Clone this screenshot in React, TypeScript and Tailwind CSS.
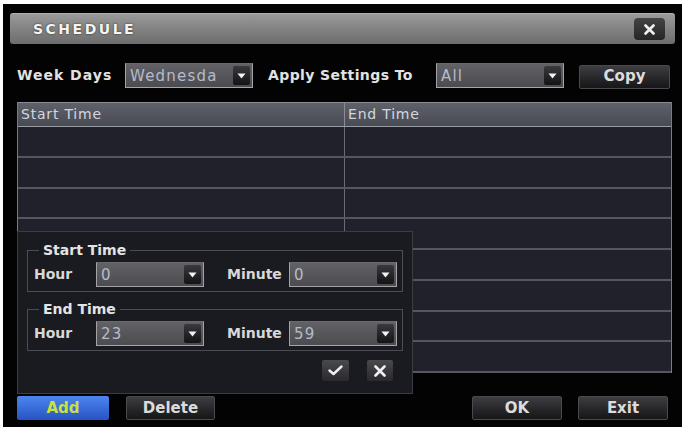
import React from "react";

const font = { fontFamily: '"DejaVu Sans", "Liberation Sans", sans-serif' };

function Arrow() {
  return (
    <div className="flex h-[19px] w-[17px] items-center justify-center rounded-[2px] bg-gradient-to-b from-[#3a3a3e] to-[#141416]">
      <svg width="9" height="6" viewBox="0 0 9 6">
        <path d="M0.5 0.5 H8.5 L4.5 5.5 Z" fill="#f2f2f2" />
      </svg>
    </div>
  );
}

function Select({ value, width }: { value: string; width: string }) {
  return (
    <div
      className={`${width} flex h-[25px] items-center justify-between border border-[#a4a4a8] border-t-[#6a6a6e] bg-gradient-to-b from-[#626266] to-[#4c4c50] pl-[4px] pr-[2px]`}
    >
      <span className="pt-[2px] text-[15px] tracking-[1.2px] text-[#b4bccb]">{value}</span>
      <Arrow />
    </div>
  );
}

function DarkButton({ label, width }: { label: string; width: string }) {
  return (
    <div
      className={`${width} flex h-[24px] items-center justify-center rounded-[2px] border border-[#4a4a4e] bg-gradient-to-b from-[#3e3e42] to-[#161618] text-[15px] font-bold text-[#dcdcdc]`}
    >
      {label}
    </div>
  );
}

function TimeGroup({ title, hour, minute }: { title: string; hour: string; minute: string }) {
  return (
    <fieldset className="w-[376px] border border-[#4c4d54] pb-[4px] pl-[6px] pt-[4px]">
      <legend className="ml-[5px] px-[4px] text-[14px] font-bold leading-[16px] text-[#e4e4e4]">
        {title}
      </legend>
      <div className="flex items-center">
        <span className="w-[62px] text-[14px] font-bold text-[#d8d8d8]">Hour</span>
        <Select value={hour} width="w-[108px]" />
        <span className="ml-[23px] w-[62px] text-[14px] font-bold text-[#d8d8d8]">Minute</span>
        <Select value={minute} width="w-[108px]" />
      </div>
    </fieldset>
  );
}

function TimeTable() {
  const rows = Array.from({ length: 8 });
  return (
    <div className="ml-[14px] mt-[14px] w-[655px] border-x border-[#7a7c84]">
      <div className="grid h-[25px] grid-cols-[327px_1fr] border-y border-t-[#8a8c94] border-b-[#9a9ca4] bg-gradient-to-b from-[#5e616a] to-[#484b54] text-[14px] tracking-[0.8px] text-[#d4d6dc]">
        <div className="flex items-center border-r border-[#8a8c94] pl-[3px]">Start Time</div>
        <div className="flex items-center pl-[3px]">End Time</div>
      </div>
      {rows.map((_, i) => (
        <div key={i} className="grid h-[30.75px] grid-cols-[327px_1fr] border-b-2 border-[#55575f] bg-[#20212a]">
          <div className="border-r border-[#6a6c74]" />
          <div />
        </div>
      ))}
    </div>
  );
}

export default function App() {
  return (
    <div className="h-[429px] w-[684px] bg-white pl-[3px] pt-[4px]" style={font}>
      <div className="relative flex h-[423px] w-[679px] flex-col bg-[#030303]">
        {/* title bar */}
        <div className="mx-[7px] mt-[9px] flex h-[31px] items-center justify-between rounded-[3px] border-t border-[#b0b0b0] bg-gradient-to-b from-[#9a9a9a] to-[#6c6c6c] pl-[23px] pr-[10px]">
          <span className="text-[14px] font-bold tracking-[2.5px] text-[#f4f4f4] [text-shadow:0_0_2px_#222]">SCHEDULE</span>
          <div className="flex h-[22px] w-[31px] items-center justify-center rounded-[4px] bg-gradient-to-b from-[#444] to-[#262626]">
            <svg width="11" height="11" viewBox="0 0 11 11">
              <path d="M1.5 1.5 L9.5 9.5 M9.5 1.5 L1.5 9.5" stroke="#f0f0f0" strokeWidth="2.6" strokeLinecap="round" />
            </svg>
          </div>
        </div>

        {/* week day / apply row */}
        <div className="ml-[14px] mt-[19px] flex h-[25px] items-center">
          <span className="w-[108px] text-[14px] font-bold tracking-[1px] text-[#e2e2e2]">Week Days</span>
          <Select value="Wednesda" width="w-[128px]" />
          <span className="ml-[15px] w-[168px] text-[14px] font-bold tracking-[0.4px] text-[#e2e2e2]">Apply Settings To</span>
          <Select value="All" width="w-[128px]" />
          <div className="ml-[15px] mt-[2px]">
            <DarkButton label="Copy" width="w-[91px]" />
          </div>
        </div>

        <TimeTable />

        {/* bottom actions */}
        <div className="ml-[14px] mt-[23px] flex w-[651px] items-center">
          <div className="flex h-[24px] w-[92px] items-center justify-center rounded-[2px] bg-gradient-to-b from-[#4d86ee] to-[#2853c4] text-[15px] font-bold text-[#c9e33c]">
            Add
          </div>
          <div className="ml-[17px]">
            <DarkButton label="Delete" width="w-[89px]" />
          </div>
          <div className="ml-auto">
            <DarkButton label="OK" width="w-[90px]" />
          </div>
          <div className="ml-[16px]">
            <DarkButton label="Exit" width="w-[90px]" />
          </div>
        </div>

        {/* add period popup */}
        <div className="absolute left-[14px] top-[227px] flex h-[163px] w-[396px] flex-col border border-[#3c3d44] bg-[#1a1b21] pl-[9px] pt-[10px]">
          <TimeGroup title="Start Time" hour="0" minute="0" />
          <div className="mt-[9px]">
            <TimeGroup title="End Time" hour="23" minute="59" />
          </div>
          <div className="mr-[19px] mt-[9px] flex justify-end gap-[18px]">
            <div className="flex h-[21px] w-[27px] items-center justify-center rounded-[2px] bg-gradient-to-b from-[#4a4a4e] to-[#2a2a2e]">
              <svg width="15" height="11" viewBox="0 0 15 11">
                <path d="M1.5 5.5 L5.5 9 L13.5 1.5" stroke="#f0f0f0" strokeWidth="2.4" fill="none" strokeLinecap="round" strokeLinejoin="round" />
              </svg>
            </div>
            <div className="flex h-[21px] w-[26px] items-center justify-center rounded-[2px] bg-gradient-to-b from-[#4a4a4e] to-[#2a2a2e]">
              <svg width="12" height="12" viewBox="0 0 12 12">
                <path d="M1.5 1.5 L10.5 10.5 M10.5 1.5 L1.5 10.5" stroke="#f0f0f0" strokeWidth="2.6" strokeLinecap="round" />
              </svg>
            </div>
          </div>
        </div>
      </div>
    </div>
  );
}
